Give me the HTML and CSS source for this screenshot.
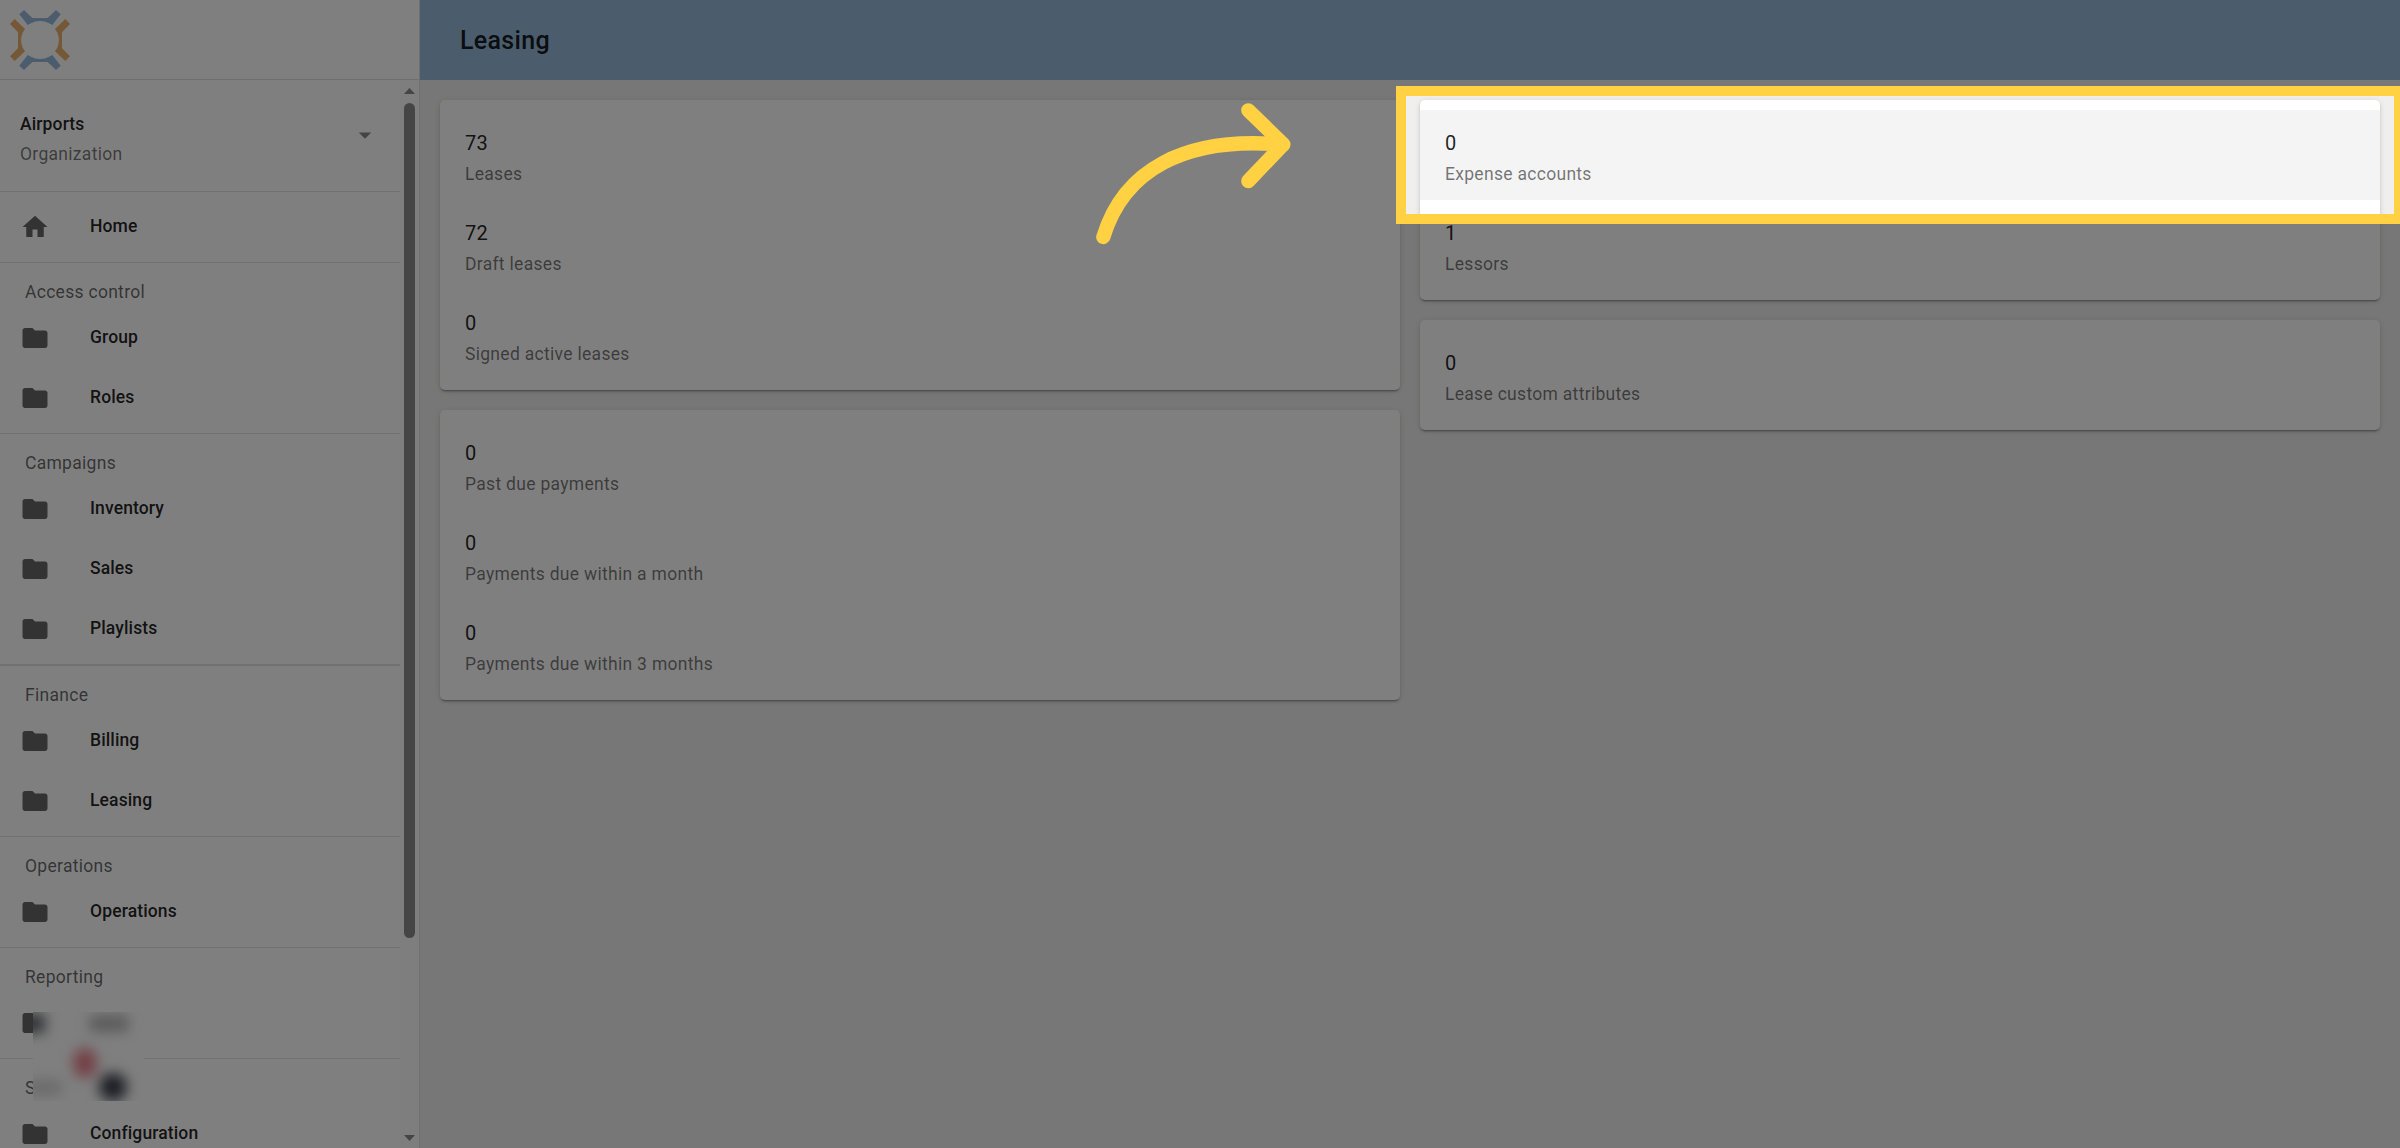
FILE: index.html
```html
<!DOCTYPE html>
<html lang="en">
<head>
    <meta charset="UTF-8">
    <meta name="viewport" content="width=device-width, initial-scale=1.0">
    <title>Leasing</title>
    <link rel="stylesheet" href="styles.css">
</head>
<body>
    <svg class="defs" width="0" height="0">
        <symbol id="folder" viewBox="0 0 24 24"><path d="M10 4H4c-1.1 0-1.99.9-1.99 2L2 18c0 1.1.9 2 2 2h16c1.1 0 2-.9 2-2V8c0-1.1-.9-2-2-2h-8l-2-2z"/></symbol>
        <symbol id="home" viewBox="0 0 24 24"><path d="M10 20v-6h4v6h5v-8h3L12 3 2 12h3v8z"/></symbol>
    </svg>

    <div class="app">
        <aside class="sidebar">
            <div class="logo">
                <svg width="90" height="79" viewBox="0 0 270 237">
                    <g class="logo-blue">
                        <path d="M58 43L72 30L97 54H143L168 30L182 43L157 75L147 70A58 58 0 0 0 93 70L83 75Z"/>
                        <path d="M58 197L72 210L97 186H143L168 210L182 197L157 165L147 170A58 58 0 0 1 93 170L83 165Z"/>
                    </g>
                    <g class="logo-orange">
                        <path d="M44 57L75 87L68 98A58 58 0 0 0 68 143L75 154L44 183L30 169L54 145V97L30 72Z"/>
                        <path d="M196 57L165 87L172 98A58 58 0 0 1 172 143L165 154L196 183L210 169L186 145V97L210 72Z"/>
                    </g>
                </svg>
            </div>
            <div class="drawer">
                <nav class="menu">
                    <div class="organization">
                        <div>
                            <div class="org-name">Airports</div>
                            <div class="label">Organization</div>
                        </div>
                        <svg class="icon caret" viewBox="0 0 24 24"><path d="M7 10l5 5 5-5z"/></svg>
                    </div>
                    <div class="divider"></div>
                    <div class="group">
                        <a class="item"><svg class="icon"><use href="#home"/></svg><span>Home</span></a>
                    </div>
                    <div class="divider"></div>
                    <div class="group">
                        <h3>Access control</h3>
                        <a class="item"><svg class="icon"><use href="#folder"/></svg><span>Group</span></a>
                        <a class="item"><svg class="icon"><use href="#folder"/></svg><span>Roles</span></a>
                    </div>
                    <div class="divider"></div>
                    <div class="group">
                        <h3>Campaigns</h3>
                        <a class="item"><svg class="icon"><use href="#folder"/></svg><span>Inventory</span></a>
                        <a class="item"><svg class="icon"><use href="#folder"/></svg><span>Sales</span></a>
                        <a class="item"><svg class="icon"><use href="#folder"/></svg><span>Playlists</span></a>
                    </div>
                    <div class="divider"></div>
                    <div class="group">
                        <h3>Finance</h3>
                        <a class="item"><svg class="icon"><use href="#folder"/></svg><span>Billing</span></a>
                        <a class="item"><svg class="icon"><use href="#folder"/></svg><span>Leasing</span></a>
                    </div>
                    <div class="divider"></div>
                    <div class="group">
                        <h3>Operations</h3>
                        <a class="item"><svg class="icon"><use href="#folder"/></svg><span>Operations</span></a>
                    </div>
                    <div class="divider"></div>
                    <div class="group">
                        <h3>Reporting</h3>
                        <a class="item"><svg class="icon"><use href="#folder"/></svg></a>
                    </div>
                    <div class="divider"></div>
                    <div class="group">
                        <h3>S</h3>
                        <a class="item"><svg class="icon"><use href="#folder"/></svg><span>Configuration</span></a>
                    </div>
                </nav>
                <div class="scrollbar">
                    <svg width="11" height="6" viewBox="0 0 12 6" preserveAspectRatio="none"><path d="M0 6L6 0l6 6z"/></svg>
                    <div class="thumb"></div>
                    <svg class="down" width="11" height="6" viewBox="0 0 12 6" preserveAspectRatio="none"><path d="M0 0l6 6 6-6z"/></svg>
                </div>
            </div>
        </aside>

        <main>
            <header>
                <h1>Leasing</h1>
            </header>
            <div class="columns">
                <div class="column">
                    <section class="card">
                        <div class="row"><div class="value">73</div><div class="label">Leases</div></div>
                        <div class="row"><div class="value">72</div><div class="label">Draft leases</div></div>
                        <div class="row"><div class="value">0</div><div class="label">Signed active leases</div></div>
                    </section>
                    <section class="card">
                        <div class="row"><div class="value">0</div><div class="label">Past due payments</div></div>
                        <div class="row"><div class="value">0</div><div class="label">Payments due within a month</div></div>
                        <div class="row"><div class="value">0</div><div class="label">Payments due within 3 months</div></div>
                    </section>
                </div>
                <div class="column">
                    <section class="card">
                        <div class="row hovered"><div class="value">0</div><div class="label">Expense accounts</div></div>
                        <div class="row"><div class="value">1</div><div class="label">Lessors</div></div>
                    </section>
                    <section class="card">
                        <div class="row"><div class="value">0</div><div class="label">Lease custom attributes</div></div>
                    </section>
                </div>
            </div>
        </main>

        <svg class="blurred" width="111" height="89" viewBox="0 0 111 89">
            <filter id="blur" x="-100%" y="-100%" width="300%" height="300%" color-interpolation-filters="sRGB"><feGaussianBlur stdDeviation="6.5"/></filter>
            <rect width="111" height="89" fill="#fefefe"/>
            <g filter="url(#blur)">
                <rect x="-14" y="2" width="26" height="19" fill="#606468"/>
                <rect x="57" y="4" width="38" height="15" fill="#b0b0b0"/>
                <rect x="-8" y="69" width="36" height="13" fill="#d0d0d0"/>
                <ellipse cx="52" cy="51" rx="12" ry="15" fill="#e8808a"/>
                <circle cx="80" cy="75" r="14" fill="#3c3e4c"/>
            </g>
        </svg>
        <div class="spotlight"></div>
        <svg class="arrow" width="210" height="160" viewBox="90 80 630 480">
            <path d="M130 500C190 302 370 196 670 223M565 120L670 222L565 332"/>
        </svg>
    </div>
</body>
</html>
```

FILE: styles.css
```css
* {
    box-sizing: border-box;
}
body {
    margin: 0;
    font-family: Roboto, "Liberation Sans", sans-serif;
    color: rgba(0, 0, 0, 0.87);
}
.defs {
    position: absolute;
}
.app {
    position: relative;
    display: flex;
    height: 1148px;
    overflow: hidden;
    background: #f0efee;
}

/* Sidebar */
.sidebar {
    display: flex;
    flex-direction: column;
    width: 420px;
    flex-shrink: 0;
    background: white;
    border-right: 1px solid #e0e0e0;
}
.logo {
    height: 80px;
    flex-shrink: 0;
    border-bottom: 1px solid #dedede;
}
.logo svg {
    display: block;
}
.logo-blue {
    fill: #96bad8;
}
.logo-orange {
    fill: #e8b071;
}
.drawer {
    display: flex;
    flex: 1;
    min-height: 0;
}
.menu {
    width: 400px;
    overflow: hidden;
}
.organization {
    display: flex;
    justify-content: space-between;
    align-items: flex-start;
    height: 110.5px;
    padding: 28px 20px 0;
}
.org-name {
    padding-top: 1px;
    font-size: 17.5px;
    font-weight: 500;
    line-height: 30px;
    letter-spacing: 0.007em;
}
.icon {
    width: 30px;
    height: 30px;
    flex-shrink: 0;
    fill: #666;
}
.caret {
    margin-top: 12px;
    fill: #8a8a8a;
}
.divider {
    height: 1.25px;
    background: #e2e2e2;
}
.group {
    padding: 5px 0;
}
h3 {
    height: 40px;
    margin: 0;
    padding: 8px 25px 0;
    font-size: 17.5px;
    font-weight: 400;
    line-height: 32px;
    letter-spacing: 0.0165em;
    color: rgba(0, 0, 0, 0.6);
}
.item {
    display: flex;
    align-items: center;
    gap: 40px;
    height: 60px;
    padding: 0 20px;
    font-size: 17.5px;
    font-weight: 500;
    letter-spacing: 0.007em;
}
.item span {
    padding-bottom: 2px;
}
.scrollbar {
    display: flex;
    flex-direction: column;
    align-items: center;
    width: 19px;
    padding: 8px 0 7px;
    background: #fcfcfc;
}
.scrollbar svg {
    fill: #8b8b8b;
}
.thumb {
    width: 11px;
    height: 835px;
    margin-top: 9px;
    border-radius: 6px;
    background: #8b8b8b;
}
.scrollbar .down {
    margin-top: auto;
}

/* Main area */
main {
    flex: 1;
}
header {
    display: flex;
    align-items: center;
    height: 80px;
    padding: 0 40px;
    background: #96bad8;
}
h1 {
    margin: 0;
    font-size: 25px;
    font-weight: 500;
    letter-spacing: 0.0125em;
}
.columns {
    display: grid;
    grid-template-columns: 1fr 1fr;
    gap: 20px;
    padding: 20px;
}
.column {
    display: flex;
    flex-direction: column;
    gap: 20px;
}
.card {
    padding: 10px 0;
    background: white;
    border-radius: 5px;
    box-shadow: 0 3px 1px -2px rgba(0, 0, 0, 0.2), 0 2px 2px rgba(0, 0, 0, 0.14), 0 1px 6px rgba(0, 0, 0, 0.12);
}
.row {
    height: 90px;
    padding: 18px 25px 0;
}
.hovered {
    background: #f4f4f4;
}
.value {
    font-size: 20px;
    line-height: 31px;
    letter-spacing: 0.009em;
}
.label {
    font-size: 17.5px;
    line-height: 30px;
    letter-spacing: 0.017em;
    color: rgba(0, 0, 0, 0.54);
}

/* Overlays */
.blurred {
    position: absolute;
    left: 33px;
    top: 1012px;
    overflow: hidden;
}
.spotlight {
    position: absolute;
    left: 1396px;
    top: 86px;
    width: 1008px;
    height: 138px;
    border: 10px solid #ffd143;
    box-shadow: 0 0 0 2400px rgba(0, 0, 0, 0.5);
}
.arrow {
    position: absolute;
    left: 1090px;
    top: 96.67px;
    fill: none;
    stroke: #ffd143;
    stroke-width: 43;
    stroke-linecap: round;
    stroke-linejoin: round;
}
```
